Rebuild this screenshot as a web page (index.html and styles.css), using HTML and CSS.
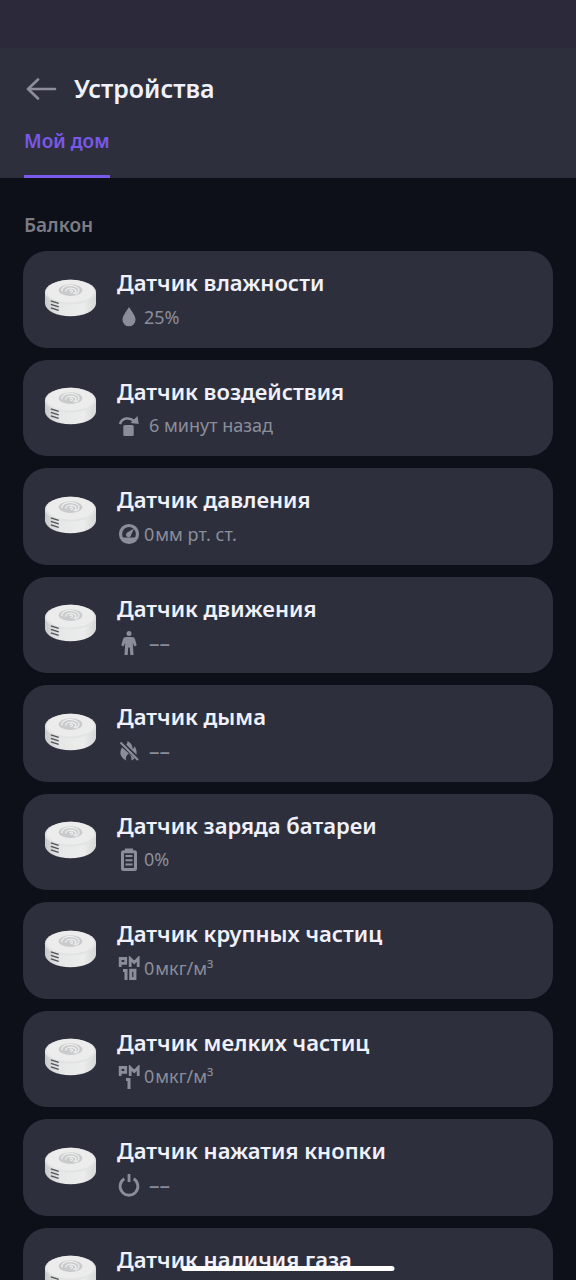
FILE: index.html
```
<!DOCTYPE html>
<html lang="ru">
<head>
<meta charset="utf-8">
<meta name="viewport" content="width=device-width, initial-scale=1">
<title>Устройства</title>
<link rel="stylesheet" href="styles.css">
</head>
<body>
<svg class="sprite" aria-hidden="true">
  <defs>
    <linearGradient id="side" x1="0" x2="1">
      <stop offset="0" stop-color="#c9cacb"/>
      <stop offset="0.3" stop-color="#e6e7e7"/>
      <stop offset="0.75" stop-color="#ececec"/>
      <stop offset="1" stop-color="#d6d7d8"/>
    </linearGradient>
    <symbol id="sensor" viewBox="0 0 54 42">
      <path d="M1 15v11c1 7 12 12.500 26 12.500S52 33 53 26V15z" fill="url(#side)"/>
      <ellipse cx="27" cy="14" rx="26" ry="12.500" fill="#e2e3e3"/>
      <ellipse cx="27" cy="13" rx="24" ry="11.500" fill="#ececec"/>
      <ellipse cx="27" cy="12" rx="12" ry="6" fill="#c9cacb"/>
      <g fill="none" stroke="#efefef" stroke-width="1.300">
        <path d="M18 13c0-5 7-7 13-5s6 6 1 8"/>
        <path d="M22 13.500c0-3 4-4.500 8-3s3 4 0 5"/>
        <path d="M26 13c1-1.500 3-1 3 0s-1 1.500-2 1.500"/>
      </g>
      <path d="M7 23l8 2.500M7 26.500l8 2.500M7 30l8 2.500" stroke="#505256" stroke-width="1.300"/>
    </symbol>
    <symbol id="drop" viewBox="0 0 24 24"><path d="M12 2C9 7 5.500 10.500 5.500 14.800a6.500 6.500 0 0 0 13 0C18.500 10.500 15 7 12 2z"/></symbol>
    <symbol id="impact" viewBox="0 0 24 24">
      <path d="M3 10C5 3.500 12.500 3 17 7" fill="none" stroke="currentColor" stroke-width="2.600"/>
      <path d="M20.500 2l1.200 8-8.200-1z"/>
      <rect x="6.300" y="11" width="10.400" height="11" rx="1.500"/>
    </symbol>
    <symbol id="gauge" viewBox="0 0 24 24">
      <circle cx="12" cy="12" r="8.500" fill="none" stroke="currentColor" stroke-width="3.200"/>
      <path d="M4 15.500h16L17 20l-5 1.500L7 20z"/>
      <path d="M17 6.500l-3.200 7.200a2.500 2.500 0 1 1-3.500-3.200z"/>
    </symbol>
    <symbol id="person" viewBox="0 0 24 24">
      <circle cx="12" cy="2.600" r="2.500"/>
      <path d="M9 6h6c1.500 0 2.500.8 3 2.200l1.700 6-2.200 1.200-1.700-3.400.7 12h-3.200l-.5-7.500h-1.600l-.5 7.500H7.500l.7-12-1.700 3.400-2.200-1.200 1.700-6C6.500 6.800 7.500 6 9 6z"/>
    </symbol>
    <symbol id="smoke" viewBox="0 0 24 24">
      <path d="M5 8.500C3.500 11 2.800 14 4 16.500c1 2.300 2.800 4 5.300 5-1-2.500-.5-4.500 2.500-7l2 2.500c.8 1.500.9 3 .4 4.500 1.500-.5 2.500-1.200 3.400-2.200zM8 7l11 10.500c1.200-3.500.8-7-1.500-10.500-.2 1.500-.8 2.500-1.800 3C15.500 6.500 14 3.500 10.500 2c.2 2-.8 3.700-2.500 5z"/>
      <path class="knockout" d="M4.500 2.500l18 17.500"/>
      <path d="M3.500 3.500l17.500 17.500" stroke="currentColor" stroke-width="2.200"/>
    </symbol>
    <symbol id="battery" viewBox="0 0 24 24">
      <path d="M8 .5h8v3H8z"/>
      <rect x="5.500" y="3.800" width="13" height="17.700" rx="1" fill="none" stroke="currentColor" stroke-width="3"/>
      <path d="M8.500 7h7v2h-7zM8.500 11.300h7v2h-7zM8.500 15.600h7v2h-7z"/>
    </symbol>
    <symbol id="pm" viewBox="0 0 24 12"><path d="M3.200 11V2.500h5.500v4.800H3.200M13.200 11V2.500l4 4 4-4V11" fill="none" stroke="currentColor" stroke-width="2.800"/></symbol>
    <symbol id="pm10" viewBox="0 0 24 24">
      <use href="#pm" width="24" height="12"/>
      <path d="M6 14.500h3V24M13.700 14.300h4.200v8.200h-4.200z" fill="none" stroke="currentColor" stroke-width="3"/>
    </symbol>
    <symbol id="pm1" viewBox="0 0 24 24">
      <use href="#pm" width="24" height="12"/>
      <path d="M9 14.500h3V24" fill="none" stroke="currentColor" stroke-width="3"/>
    </symbol>
    <symbol id="power" viewBox="0 0 24 24">
      <path d="M7.300 5.800a8.900 8.900 0 1 0 9.400 0M12 1v8" fill="none" stroke="currentColor" stroke-width="2.800"/>
    </symbol>
  </defs>
</svg>

<div class="app">
  <header class="header">
    <div class="titlebar">
      <button class="back" type="button" aria-label="Назад">
        <svg class="back-icon" viewBox="0 0 34 24" aria-hidden="true"><path d="M31 13H4M14 3.500L4 13l10 9.500"/></svg>
      </button>
      <h1 class="title">Устройства</h1>
    </div>
    <nav class="tabs"><button class="tab" type="button" aria-current="page">Мой дом</button></nav>
  </header>

  <main class="content">
    <h2 class="room">Балкон</h2>
    <ul class="devices">
      <li><button class="card" type="button"><svg class="photo" aria-hidden="true"><use href="#sensor"/></svg><span class="info"><span class="name">Датчик влажности</span><span class="state"><svg class="icon" aria-hidden="true"><use href="#drop"/></svg><span class="value">25%</span></span></span></button></li>
      <li><button class="card" type="button"><svg class="photo" aria-hidden="true"><use href="#sensor"/></svg><span class="info"><span class="name">Датчик воздействия</span><span class="state event"><svg class="icon" aria-hidden="true"><use href="#impact"/></svg><span class="value">6 минут назад</span></span></span></button></li>
      <li><button class="card" type="button"><svg class="photo" aria-hidden="true"><use href="#sensor"/></svg><span class="info"><span class="name">Датчик давления</span><span class="state"><svg class="icon" aria-hidden="true"><use href="#gauge"/></svg><span class="value">0<span class="unit">мм рт. ст.</span></span></span></span></button></li>
      <li><button class="card" type="button"><svg class="photo" aria-hidden="true"><use href="#sensor"/></svg><span class="info"><span class="name">Датчик движения</span><span class="state event"><svg class="icon" aria-hidden="true"><use href="#person"/></svg><span class="empty">––</span></span></span></button></li>
      <li><button class="card" type="button"><svg class="photo" aria-hidden="true"><use href="#sensor"/></svg><span class="info"><span class="name">Датчик дыма</span><span class="state event"><svg class="icon" aria-hidden="true"><use href="#smoke"/></svg><span class="empty">––</span></span></span></button></li>
      <li><button class="card" type="button"><svg class="photo" aria-hidden="true"><use href="#sensor"/></svg><span class="info"><span class="name">Датчик заряда батареи</span><span class="state"><svg class="icon" aria-hidden="true"><use href="#battery"/></svg><span class="value">0%</span></span></span></button></li>
      <li><button class="card" type="button"><svg class="photo" aria-hidden="true"><use href="#sensor"/></svg><span class="info"><span class="name">Датчик крупных частиц</span><span class="state"><svg class="icon" aria-hidden="true"><use href="#pm10"/></svg><span class="value">0<span class="unit">мкг/м³</span></span></span></span></button></li>
      <li><button class="card" type="button"><svg class="photo" aria-hidden="true"><use href="#sensor"/></svg><span class="info"><span class="name">Датчик мелких частиц</span><span class="state"><svg class="icon" aria-hidden="true"><use href="#pm1"/></svg><span class="value">0<span class="unit">мкг/м³</span></span></span></span></button></li>
      <li><button class="card" type="button"><svg class="photo" aria-hidden="true"><use href="#sensor"/></svg><span class="info"><span class="name">Датчик нажатия кнопки</span><span class="state event"><svg class="icon" aria-hidden="true"><use href="#power"/></svg><span class="empty">––</span></span></span></button></li>
      <li><button class="card" type="button"><svg class="photo" aria-hidden="true"><use href="#sensor"/></svg><span class="info"><span class="name">Датчик наличия газа</span><span class="state event"><svg class="icon" aria-hidden="true"><use href="#smoke"/></svg></span></span></button></li>
    </ul>
  </main>
</div>
<div class="home-indicator"></div>
</body>
</html>
```

FILE: styles.css
```
* {
  box-sizing: border-box;
}

body {
  margin: 0;
  background: #0d1018;
  color: #f0f1fc;
  font-family: "Noto Sans", sans-serif;
}

button {
  margin: 0;
  padding: 0;
  border: 0;
  background: none;
  color: inherit;
  font: inherit;
  text-align: left;
  cursor: pointer;
}

.sprite {
  position: absolute;
  width: 0;
  height: 0;
}

.app {
  display: flex;
  flex-direction: column;
  height: 100vh;
}

.header {
  flex: none;
  padding: 20px 24px 0;
  border-top: 48px solid #2c2a3a;
  background: #2d303c;
}

.titlebar {
  display: flex;
  align-items: center;
  gap: 16px;
  height: 40px;
}

.back {
  display: flex;
}

.back-icon {
  width: 34px;
  height: 24px;
  fill: none;
  stroke: #8d8e9a;
  stroke-width: 2.6;
  stroke-linecap: round;
}

.title {
  margin: 0;
  font-size: 25px;
  font-weight: 600;
  line-height: 40px;
}

.tabs {
  display: flex;
  padding-top: 17px;
}

.tab {
  padding-bottom: 18px;
  border-bottom: 3px solid #7a58ea;
  color: #7a58ea;
  font-size: 19px;
  font-weight: 600;
  line-height: 32px;
}

.content {
  flex: 1;
  min-height: 0;
  padding: 31px 23px 24px;
  overflow-y: auto;
  scrollbar-width: none;
}

.room {
  margin: 0 0 10px 1px;
  color: #7b7c84;
  font-size: 19px;
  font-weight: 600;
  line-height: 32px;
}

.devices {
  display: flex;
  flex-direction: column;
  gap: 12px;
  margin: 0;
  padding: 0;
  list-style: none;
}

.card {
  display: flex;
  align-items: center;
  gap: 20px;
  width: 100%;
  padding: 15px 20px 16px 21px;
  border-radius: 24px;
  background: #2d303c;
  line-height: 1.5;
}

.photo {
  flex: none;
  width: 53px;
  height: 42px;
}

.info {
  display: flex;
  flex-direction: column;
  gap: 4px;
}

.name {
  font-size: 22px;
  font-weight: 600;
}

.state {
  display: flex;
  align-items: center;
  gap: 3px;
  min-height: 1.5em;
  color: #8b8d9b;
  font-size: 19px;
}

.event {
  gap: 8px;
}

.icon {
  width: 24px;
  height: 24px;
  fill: currentColor;
}

.knockout {
  fill: none;
  stroke: #2d303c;
  stroke-width: 2;
}

.value {
  font-size: 18px;
}

.empty {
  font-size: 21px;
  line-height: 24px;
}

.unit {
  padding-left: 1px;
}

.home-indicator {
  position: fixed;
  bottom: 9px;
  left: 50%;
  width: 37%;
  height: 5px;
  border-radius: 3px;
  background: #ffffff;
  transform: translateX(-50%);
}
```
